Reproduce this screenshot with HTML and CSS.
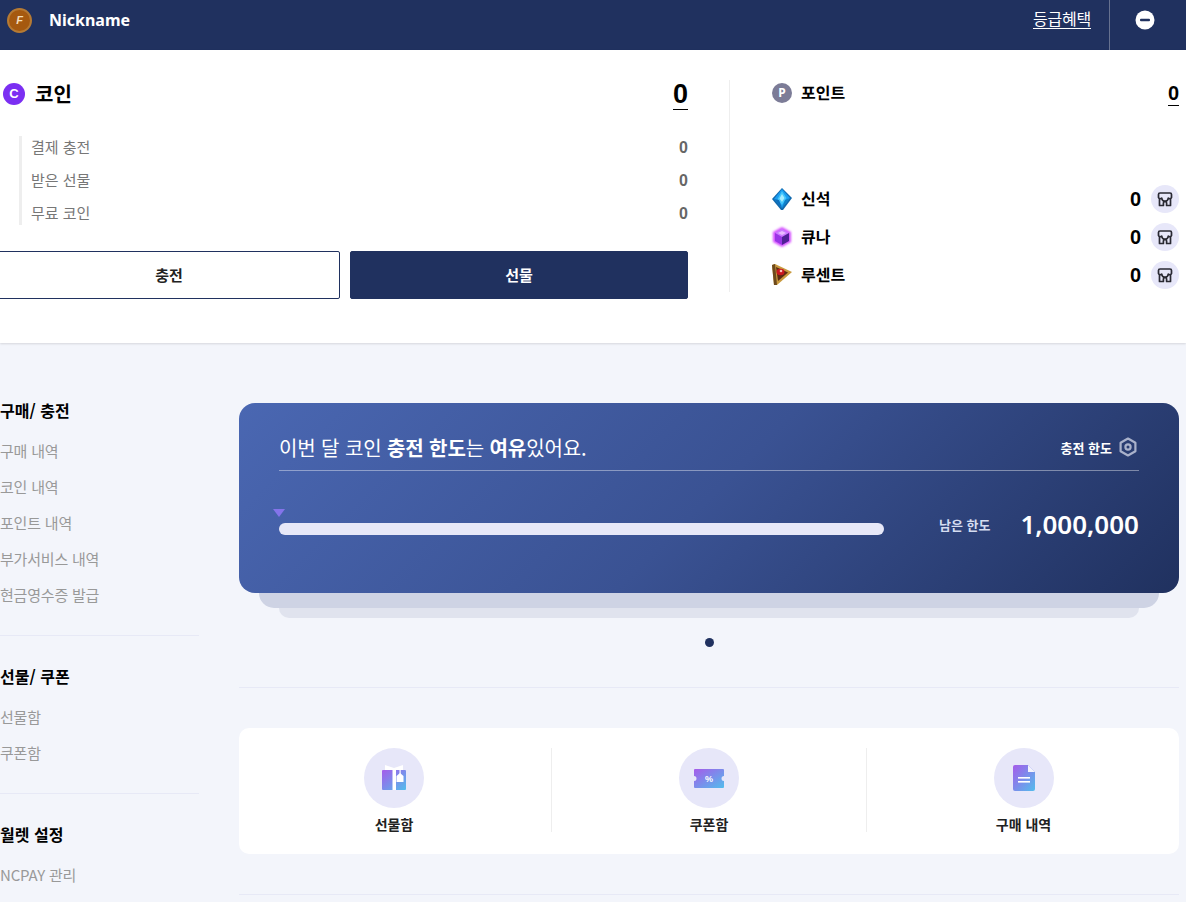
FILE: index.html
```html
<!DOCTYPE html>
<html lang="ko">
<head>
  <meta charset="UTF-8" />
  <meta name="viewport" content="width=device-width, initial-scale=1.0" />
  <title>Wallet</title>
  <link rel="stylesheet" href="styles.css">
</head>
<body>

<!-- shared icon parts -->
<svg class="icon-defs" width="0" height="0">
  <defs>
    <linearGradient id="iconGrad" x1="0" y1="0" x2="1" y2="1">
      <stop offset="0" stop-color="#a65bea"/>
      <stop offset="1" stop-color="#52bdec"/>
    </linearGradient>
    <filter id="glow" x="-30%" y="-30%" width="160%" height="160%">
      <feGaussianBlur stdDeviation="1"/>
    </filter>
    <symbol id="store" viewBox="0 0 16 16">
      <g fill="none" stroke="#2a2a33" stroke-width="1.7" stroke-linejoin="round" stroke-linecap="round">
        <path d="M3 2h10A1.500 1.500 0 0 1 14.500 3.500v3a1.900 1.900 0 0 1-3.200.6 3.300 3.300 0 0 1-6.600 0 1.900 1.900 0 0 1-3.200-.6v-3A1.500 1.500 0 0 1 3 2z"/>
        <path d="M2.500 8.500V14.500h3.900v-2.500a1.600 1.600 0 0 1 3.200 0v2.500h3.900V8.500"/>
      </g>
    </symbol>
  </defs>
</svg>

<header class="topbar">
  <div class="profile">
    <span class="avatar">F</span>
    <span class="nickname">Nickname</span>
  </div>
  <a class="grade-link">등급혜택</a>
  <div class="collapse">
    <svg width="20" height="20" viewBox="0 0 20 20"><circle cx="10" cy="10" r="9.500" fill="#fff"/><rect x="5" y="8.800" width="10" height="2.400" rx="1" fill="#20315f"/></svg>
  </div>
</header>

<section class="wallet">
  <div class="coin-col">
    <div class="coin-head">
      <span class="coin-badge">C</span>
      <h2>코인</h2>
      <span class="coin-total">0</span>
    </div>
    <ul class="coin-list">
      <li><span>결제 충전</span><b>0</b></li>
      <li><span>받은 선물</span><b>0</b></li>
      <li><span>무료 코인</span><b>0</b></li>
    </ul>
    <div class="coin-buttons">
      <button class="btn-outline">충전</button>
      <button class="btn-navy">선물</button>
    </div>
  </div>

  <div class="point-col">
    <div class="point-head">
      <span class="point-badge">P</span>
      <span class="item-name">포인트</span>
      <span class="point-total">0</span>
    </div>
    <ul class="item-list">
      <li>
        <svg class="item-icon" width="22" height="24" viewBox="0 0 22 24">
          <polygon points="11,1 21,11 12,23 10,23 1,12" fill="#1169ad"/>
          <polygon points="11,2 19,11 11,21 3,12" fill="#1a9df0"/>
          <polygon points="11,4 15.500,11 11,18 6.500,12" fill="#45c6fb"/>
          <polygon points="11,7 13.500,11 11,15 8.500,11.500" fill="#a6ecff"/>
          <polygon points="3,12 8,13 11,21" fill="#0d6fbd"/>
          <polygon points="19,11 14,13 11,21" fill="#0f80c8"/>
        </svg>
        <span class="item-name">신석</span>
        <b class="item-value">0</b>
        <button class="store-btn"><svg width="16" height="16"><use href="#store"/></svg></button>
      </li>
      <li>
        <svg class="item-icon" width="22" height="24" viewBox="0 0 22 24">
          <polygon points="11,2 20,7 20,17 11,22 2,17 2,7" fill="#d44dff" filter="url(#glow)"/>
          <polygon points="11,4 18,8 11,12 4,8" fill="#c97bff"/>
          <polygon points="11,6 15,8 11,10 7,8" fill="#e9bcff"/>
          <polygon points="4,8 11,12 11,20 4,16" fill="#9a35e6"/>
          <polygon points="18,8 11,12 11,20 18,16" fill="#4f2196"/>
        </svg>
        <span class="item-name">큐나</span>
        <b class="item-value">0</b>
        <button class="store-btn"><svg width="16" height="16"><use href="#store"/></svg></button>
      </li>
      <li>
        <svg class="item-icon" width="22" height="24" viewBox="0 0 22 24">
          <polygon points="1,2 4,1 21,9 6,22 3,22" fill="#c99a3e"/>
          <polygon points="1,2 4,1 6,22 3,22" fill="#6e4a1c"/>
          <polygon points="5,4 17,9.500 7,18" fill="#5c2a12"/>
          <ellipse cx="9.500" cy="9" rx="4" ry="3.200" fill="#c9181f"/>
          <circle cx="10" cy="8" r="1.300" fill="#f7c0ba"/>
        </svg>
        <span class="item-name">루센트</span>
        <b class="item-value">0</b>
        <button class="store-btn"><svg width="16" height="16"><use href="#store"/></svg></button>
      </li>
    </ul>
  </div>
</section>

<div class="content">
  <aside class="sidebar">
    <div class="side-group">
      <h3>구매/ 충전</h3>
      <a>구매 내역</a>
      <a>코인 내역</a>
      <a>포인트 내역</a>
      <a>부가서비스 내역</a>
      <a>현금영수증 발급</a>
    </div>
    <div class="side-group">
      <h3>선물/ 쿠폰</h3>
      <a>선물함</a>
      <a>쿠폰함</a>
    </div>
    <div class="side-group">
      <h3>월렛 설정</h3>
      <a>NCPAY 관리</a>
    </div>
  </aside>

  <main class="main">
    <div class="limit-card">
      <div class="limit-head">
        <p class="limit-title">이번 달 코인 <b>충전 한도</b>는 <b>여유</b>있어요.</p>
        <span class="limit-setting">
          충전 한도
          <svg width="20" height="20" viewBox="0 0 20 20" fill="none" stroke="#aab2cb" stroke-width="2.200" stroke-linejoin="round"><path d="M10 1.500l7.400 4.200v8.600L10 18.500l-7.400-4.200V5.700z"/><circle cx="10" cy="10" r="2.600"/></svg>
        </span>
      </div>
      <div class="limit-row">
        <div class="limit-bar"><span class="limit-marker"></span></div>
        <span class="limit-label">남은 한도</span>
        <span class="limit-value">1,000,000</span>
      </div>
    </div>
    <div class="card-layer-one"></div>
    <div class="card-layer-two"></div>

    <div class="dots"><span></span></div>
    <hr class="rule">

    <div class="shortcuts">
      <a class="shortcut">
        <span class="shortcut-circle">
          <svg width="24" height="26" viewBox="0 0 24 26">
            <rect y="5" width="24" height="20" rx="1" fill="url(#iconGrad)"/>
            <path d="M3 0l9 3 9-3v5H3z" fill="#fff"/>
            <rect x="10.500" y="3" width="3.500" height="22" fill="#fff"/>
            <rect x="17.500" y="4" width="1.200" height="5" fill="#fff"/>
            <path d="M18 8l3.500 3v6h-7v-6z" fill="#fff"/>
          </svg>
        </span>
        <span class="shortcut-label">선물함</span>
      </a>
      <a class="shortcut">
        <span class="shortcut-circle">
          <svg width="30" height="19" viewBox="0 0 30 19">
            <path d="M1 0h28a1 1 0 0 1 1 1v6a2.500 2.500 0 0 0 0 5v6a1 1 0 0 1-1 1H1a1 1 0 0 1-1-1v-6a2.500 2.500 0 0 0 0-5V1a1 1 0 0 1 1-1z" fill="url(#iconGrad)"/>
            <text x="15" y="13" text-anchor="middle" class="coupon-pct">%</text>
          </svg>
        </span>
        <span class="shortcut-label">쿠폰함</span>
      </a>
      <a class="shortcut">
        <span class="shortcut-circle">
          <svg width="22" height="26" viewBox="0 0 22 26">
            <path d="M2 0h13l7 7v17a2 2 0 0 1-2 2H2a2 2 0 0 1-2-2V2a2 2 0 0 1 2-2z" fill="url(#iconGrad)"/>
            <path d="M15 0l7 7h-7z" fill="#f3f3fc"/>
            <rect x="5" y="12" width="12" height="1.600" fill="#fff"/>
            <rect x="5" y="16" width="12" height="1.600" fill="#fff"/>
          </svg>
        </span>
        <span class="shortcut-label">구매 내역</span>
      </a>
    </div>
    <hr class="rule">
  </main>
</div>

</body>
</html>
```

FILE: styles.css
```css
* {
  box-sizing: border-box;
}
html, body {
  overflow: hidden;
}
body {
  margin: 0;
  font-family: "Noto Sans CJK KR", "Noto Sans", sans-serif;
  background-color: #f3f5fb;
  color: #000;
}
ul {
  list-style: none;
  margin: 0;
  padding: 0;
}
h2, h3, p {
  margin: 0;
}
.icon-defs {
  position: absolute;
}

/* top bar */
.topbar {
  display: flex;
  align-items: center;
  height: 50px;
  padding-bottom: 10px;
  background-color: #20315f;
  color: #fff;
}
.profile {
  display: flex;
  align-items: center;
  flex: 1;
  padding-left: 7px;
}
.avatar {
  width: 25px;
  height: 25px;
  border-radius: 50%;
  border: 2px solid #b57a34;
  background-color: #a5590f;
  color: #f3dcb9;
  font: italic bold 11px/21px "Liberation Sans", sans-serif;
  text-align: center;
}
.nickname {
  margin-left: 17px;
  font-family: "Noto Sans", sans-serif;
  font-size: 16px;
  font-weight: 700;
}
.grade-link {
  font-size: 16px;
  line-height: 19px;
  letter-spacing: -0.2px;
  border-bottom: 1px solid #fff;
  margin-top: -2px;
}
.collapse {
  display: flex;
  align-items: center;
  justify-content: center;
  width: 77px;
  height: 50px;
  margin: 0 0 -10px 18px;
  padding: 0 6px 10px 0;
  border-left: 1px solid #66718f;
}

/* wallet summary */
.wallet {
  display: flex;
  gap: 41px;
  padding: 29px 7px 44px 0;
  background-color: #fff;
  box-shadow: 0 1px 2px rgba(0, 0, 0, 0.12);
}
.coin-col {
  width: 688px;
  flex: none;
}
.coin-head {
  display: flex;
  align-items: center;
  height: 30px;
  padding-left: 3px;
}
.coin-badge {
  width: 22px;
  height: 22px;
  border-radius: 50%;
  background-color: #7b2ff2;
  color: #fff;
  font: bold 13px/22px "Liberation Sans", sans-serif;
  text-align: center;
}
.coin-head h2 {
  flex: 1;
  margin-left: 10px;
  padding-bottom: 2px;
  font-size: 20px;
  font-weight: 700;
}
.coin-total {
  font: bold 27px/30px "Liberation Sans", sans-serif;
  border-bottom: 1px solid #000;
}
.coin-list {
  margin: 27px 0 0 19px;
  padding-left: 9px;
  border-left: 3px solid #eee;
  display: flex;
  flex-direction: column;
  gap: 10px;
}
.coin-list li {
  display: flex;
  justify-content: space-between;
  align-items: center;
  height: 23px;
  font-size: 15px;
  color: #777;
}
.coin-list span {
  margin-top: -2px;
}
.coin-list b {
  font: bold 16px "Liberation Sans", sans-serif;
  color: #666;
}
.coin-buttons {
  display: flex;
  gap: 10px;
  margin: 26px 0 0 -2px;
}
.coin-buttons button {
  height: 48px;
  padding-bottom: 3px;
  font-family: inherit;
  font-size: 15px;
  font-weight: 700;
  border-radius: 2px;
}
.btn-outline {
  flex: 1;
  background: #fff;
  border: 1px solid #20315f;
  color: #222;
}
.btn-navy {
  width: 338px;
  background: #20315f;
  border: 1px solid #20315f;
  color: #fff;
}

.point-col {
  flex: 1;
  height: 212px;
  margin-top: 1px;
  padding-left: 42px;
  border-left: 1px solid #eee;
}
.point-head {
  display: flex;
  align-items: center;
  height: 26px;
}
.point-badge {
  width: 20px;
  height: 20px;
  margin-right: 9px;
  border-radius: 50%;
  background-color: #7c7c97;
  color: #fff;
  font: bold 12px/20px "Noto Sans", sans-serif;
  text-align: center;
}
.item-name {
  flex: 1;
  padding-bottom: 2px;
  font-size: 16px;
  font-weight: 700;
  text-rendering: geometricPrecision;
}
.point-total {
  font: bold 20px/24px "Liberation Sans", sans-serif;
  border-bottom: 1px solid #000;
}
.item-list {
  margin-top: 79px;
  display: flex;
  flex-direction: column;
  gap: 10px;
}
.item-list li {
  display: flex;
  align-items: center;
  height: 28px;
}
.item-icon {
  margin-left: -1px;
  margin-right: 8px;
}
.item-value {
  font: bold 20px "Liberation Sans", sans-serif;
}
.store-btn {
  display: flex;
  align-items: center;
  justify-content: center;
  width: 28px;
  height: 28px;
  margin-left: 10px;
  padding: 0;
  border: none;
  border-radius: 50%;
  background-color: #e7e7f9;
}

/* lower part */
.content {
  display: flex;
  gap: 40px;
  padding: 57px 7px 0 0;
}
.sidebar {
  width: 199px;
  flex: none;
  margin-top: -1px;
}
.side-group {
  display: flex;
  flex-direction: column;
  gap: 14px;
  padding: 29px 0 29px;
  border-bottom: 1px solid #e7e9f6;
}
.side-group:first-child {
  padding-top: 0;
}
.side-group:last-child {
  border-bottom: none;
}
.side-group h3 {
  margin-bottom: 5px;
  font-size: 16px;
  line-height: 22px;
  font-weight: 700;
}
.side-group a {
  font-size: 15px;
  line-height: 22px;
  letter-spacing: -0.2px;
  color: #999;
}

.main {
  flex: 1;
  margin-top: 3px;
}
.limit-card {
  height: 190px;
  padding: 34px 40px 0;
  border-radius: 16px;
  background: linear-gradient(135deg, #4a67b2 0%, #3a5293 50%, #20315f 100%);
  color: #fff;
}
.limit-head {
  display: flex;
  align-items: center;
  justify-content: space-between;
  padding-bottom: 7px;
  border-bottom: 1px solid rgba(255, 255, 255, 0.4);
}
.limit-title {
  margin-top: -2px;
  padding-bottom: 2px;
  font-size: 20px;
  line-height: 26px;
  letter-spacing: -0.1px;
}
.limit-setting {
  display: flex;
  align-items: center;
  gap: 6px;
  margin: -6px 1px 0 0;
  font-size: 13px;
  font-weight: 700;
}
.limit-row {
  display: flex;
  align-items: center;
  margin-top: 35px;
}
.limit-bar {
  position: relative;
  width: 605px;
  height: 12px;
  margin-top: 8px;
  border-radius: 6px;
  background-color: #e7e8f8;
}
.limit-marker {
  position: absolute;
  left: -6px;
  top: -14px;
  border-left: 6px solid transparent;
  border-right: 6px solid transparent;
  border-top: 8px solid #8474ea;
}
.limit-label {
  margin-left: 55px;
  padding-bottom: 2px;
  font-size: 13px;
  font-weight: 700;
  color: #d5dcf0;
}
.limit-value {
  margin-left: auto;
  padding-bottom: 2px;
  font-family: "Noto Sans", sans-serif;
  font-size: 26px;
  line-height: 36px;
  font-weight: 600;
}
.card-layer-one {
  height: 15px;
  margin: 0 20px;
  border-radius: 0 0 16px 16px;
  background-color: #ced3e4;
}
.card-layer-two {
  height: 10px;
  margin: 0 40px;
  border-radius: 0 0 10px 10px;
  background-color: #e0e3ee;
}
.dots {
  display: flex;
  justify-content: center;
  margin-top: 20px;
}
.dots span {
  width: 9px;
  height: 9px;
  border-radius: 50%;
  background-color: #20315f;
}
.rule {
  height: 1px;
  margin: 40px 0 0;
  border: none;
  background-color: #e7e9f6;
}
.shortcuts {
  display: grid;
  grid-template-columns: 312px 315px 1fr;
  height: 126px;
  margin-top: 40px;
  padding: 20px 0 22px;
  border-radius: 10px;
  background-color: #fff;
}
.shortcut {
  display: flex;
  flex-direction: column;
  align-items: center;
  border-left: 1px solid #eee;
}
.shortcut:first-child {
  padding-right: 2px;
  border-left: none;
}
.shortcut:last-child {
  padding-left: 1px;
}
.shortcut-circle {
  display: flex;
  align-items: center;
  justify-content: center;
  width: 60px;
  height: 60px;
  border-radius: 50%;
  background-color: #e7e7f9;
}
.shortcut-label {
  margin-top: 9px;
  font-size: 14px;
  line-height: 15px;
  font-weight: 700;
  color: #222;
}
.coupon-pct {
  font: bold 9px "Liberation Sans", sans-serif;
  fill: #fff;
}
```
